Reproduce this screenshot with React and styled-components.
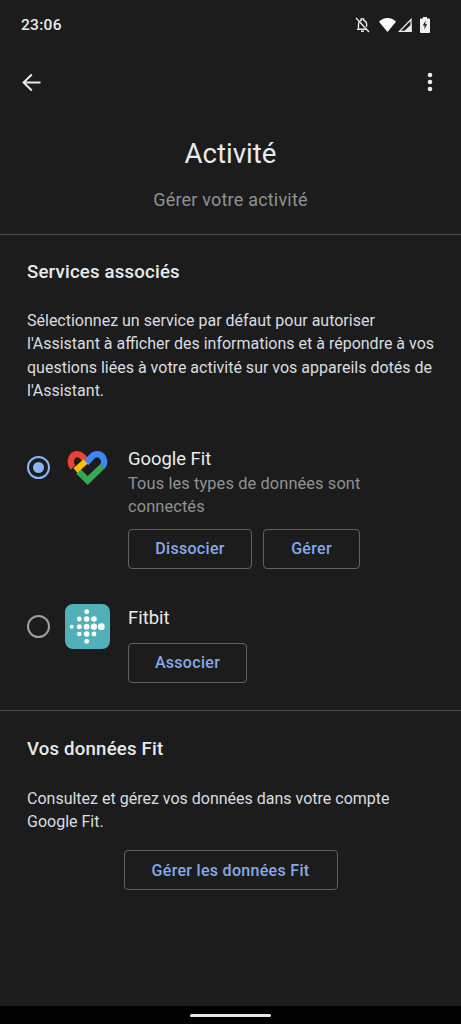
import React from 'react'
import styled, { createGlobalStyle } from 'styled-components'

const Global = createGlobalStyle`
html, body { margin: 0; padding: 0; background: #1c1c1c; }
* { box-sizing: border-box; }
`
const Screen = styled.div`
width: 461px;
height: 1024px;
background: #1c1c1c;
display: flex;
flex-direction: column;
font-family: Roboto, "Open Sans", sans-serif;
color: #e8eaed;
overflow: hidden;
`
const StatusBar = styled.div`
height: 50px;
flex: none;
padding: 0 31px 0 21px;
display: flex;
align-items: center;
justify-content: space-between;
font-size: 15.5px;
font-weight: 500;
letter-spacing: 0.3px;
`
const StatusIcons = styled.div`
display: flex;
align-items: center;
`
const StatusIcon = styled.span`
display: flex;
margin-left: ${({ $left }) => $left}px;
`
const Toolbar = styled.div`
height: 64px;
flex: none;
padding: 0 28px 0 22px;
display: flex;
align-items: center;
justify-content: space-between;
`
const Header = styled.div`
display: flex;
flex-direction: column;
align-items: center;
height: 121px;
flex: none;
padding-top: 24px;
border-bottom: 1px solid #4d4e50;
`
const Title = styled.div`
font-size: 27.6px;
line-height: 32px;
color: #e8eaed;
`
const Subtitle = styled.div`
font-size: 18px;
letter-spacing: 0.2px;
line-height: 24px;
margin-top: 18px;
color: #8e9297;
`
const Section = styled.div`
padding: ${({ $top }) => $top}px 27px 0;
`
const Heading = styled.div`
font-size: 18.6px;
font-weight: 500;
letter-spacing: 0.2px;
line-height: 24px;
color: #e8eaed;
`
const Para = styled.div`
font-size: 16px;
line-height: 23.3px;
white-space: nowrap;
margin-top: ${({ $top }) => $top}px;
color: #dadce0;
`
const ServiceRow = styled.div`
display: flex;
align-items: flex-start;
margin-top: ${({ $top }) => $top}px;
`
const Radio = styled.div`
width: 23px;
height: 23px;
flex: none;
border-radius: 50%;
border: 2px solid ${({ $on }) => ($on ? '#8ab4f8' : '#9aa0a6')};
display: flex;
align-items: center;
justify-content: center;
margin-top: ${({ $top }) => $top}px;
margin-right: 15px;
&::after {
  content: '';
  width: 11px;
  height: 11px;
  border-radius: 50%;
  background: ${({ $on }) => ($on ? '#8ab4f8' : 'transparent')};
}
`
const ServiceIcon = styled.div`
width: 45px;
flex: none;
margin-right: 18px;
padding-left: ${({ $left }) => $left || 0}px;
padding-top: ${({ $pad }) => $pad || 0}px;
line-height: 0;
`
const ServiceBody = styled.div`
flex: 1;
min-width: 0;
`
const ServiceName = styled.div`
font-size: 18.4px;
line-height: 25px;
padding-top: ${({ $top }) => $top || 0}px;
color: #e8eaed;
`
const ServiceDesc = styled.div`
font-size: 16.4px;
letter-spacing: 0.1px;
line-height: 23.3px;
margin-top: 1px;
color: #8e9297;
width: 270px;
`
const Buttons = styled.div`
display: flex;
gap: 11px;
margin-top: ${({ $top }) => $top}px;
`
const Button = styled.div`
height: 40px;
width: ${({ $w }) => $w}px;
border: 1px solid #5f6368;
border-radius: 4px;
display: flex;
align-items: center;
justify-content: center;
font-size: 16px;
font-weight: 500;
letter-spacing: 0.3px;
color: #84aaea;
`
const Divider = styled.div`
height: 1px;
background: #4d4e50;
margin-top: 27px;
`
const Centered = styled.div`
display: flex;
justify-content: center;
margin-top: 17px;
`
const Spacer = styled.div`
flex: 1;
`
const NavBar = styled.div`
height: 18px;
flex: none;
background: #000;
display: flex;
justify-content: center;
padding-top: 8px;
`
const Handle = styled.div`
width: 81px;
height: 3px;
border-radius: 2px;
background: #e8e8e8;
`

const BellOff = () => (
  <svg width="15" height="16" viewBox="0 0 15 16" fill="none" stroke="#e8eaed" strokeWidth="1.4">
    <path d="M3.500 11.500V7.200C3.500 5.500 4.300 4.200 5.600 3.600L6.100 3.300V2h2.600v1.300c1.800.5 2.900 2 2.900 3.900v2.600" />
    <path d="M2 12.200h9.500M6 14.300h2.800" />
    <path d="M1 1l13 14" />
  </svg>
)
const Wifi = () => (
  <svg width="17" height="14" viewBox="0 0 17 14"><path d="M0 3.800C2.200 1.400 5.200 0 8.500 0s6.300 1.400 8.500 3.800L8.500 14z" fill="#fff" /></svg>
)
const Signal = () => (
  <svg width="14" height="14" viewBox="0 0 14 14" fill="none" stroke="#e8eaed" strokeWidth="1.300"><path d="M13 1.500v11.800H1.500z" /><path d="M7 13.300L13 7.500v5.800z" fill="#e8eaed" /></svg>
)
const Battery = () => (
  <svg width="10" height="16" viewBox="0 0 10 16">
    <path d="M3 0h4v1.500h2.200c.4 0 .8.3.8.8v13c0 .4-.4.7-.8.7H.8c-.4 0-.8-.3-.8-.7v-13c0-.5.4-.8.8-.8H3z" fill="#f1f1f1" />
    <path d="M5.700 3.500L2.800 8.600h1.900l-.5 3.900 3-5.300H5.200z" fill="#1c1c1c" />
  </svg>
)
const BackArrow = () => (
  <svg width="19" height="19" viewBox="0 0 19 19" fill="none" stroke="#e8eaed" strokeWidth="2"><path d="M18.500 9.500H2M9.800 1.500L1.600 9.500l8.200 8" /></svg>
)
const MoreDots = () => (
  <svg width="6" height="20" viewBox="0 0 6 20" fill="#e8eaed"><circle cx="3" cy="3" r="2.300" /><circle cx="3" cy="10" r="2.300" /><circle cx="3" cy="17" r="2.300" /></svg>
)
const FitHeart = () => (
  <svg width="41" height="35" viewBox="0 0 41 35" fill="none" strokeWidth="6.300">
    <path d="M11.500 20.500L20.700 29.500L35.700 15" stroke="#34a853" />
    <path d="M6 16.500C1.700 12 4.200 3.200 10 3.200c2.200 0 3.800.8 5 2L20 10" stroke="#ea4335" />
    <path d="M19 12L25 5.500c1.300-1.400 3-2.300 5.500-2.300 6 0 8.500 8.500 5 12" stroke="#4285f4" />
    <path d="M8.500 19.500L18.500 10.500" stroke="#fbbc04" />
  </svg>
)
const dots = [
  [21.700, 7.700, 2.400], [21.700, 15, 2.800], [21.700, 22.700, 2.900], [21.700, 30, 2.800], [21.700, 37.300, 2.400],
  [14.300, 15, 2.400], [14.300, 22.700, 2.500], [14.300, 30, 2.300],
  [29, 15, 2.800], [29, 22.700, 3.100], [29, 30, 2.400],
  [6.700, 22.700, 2], [36.300, 22.700, 3.400],
]
const FitbitLogo = () => (
  <svg width="45" height="45" viewBox="0 0 45 45">
    <rect width="45" height="45" rx="8" fill="#52b0b9" />
    <g fill="#fff">
      {dots.map(([x, y, r]) => <circle key={x + '-' + y} cx={x} cy={y} r={r} />)}
    </g>
  </svg>
)

export default function App() {
  return (
    <Screen>
      <Global />
      <StatusBar>
        <span>23:06</span>
        <StatusIcons>
          <BellOff />
          <StatusIcon $left={9}><Wifi /></StatusIcon>
          <StatusIcon $left={2}><Signal /></StatusIcon>
          <StatusIcon $left={8}><Battery /></StatusIcon>
        </StatusIcons>
      </StatusBar>
      <Toolbar>
        <BackArrow />
        <MoreDots />
      </Toolbar>
      <Header>
        <Title>Activité</Title>
        <Subtitle>Gérer votre activité</Subtitle>
      </Header>
      <Section $top={25}>
        <Heading>Services associés</Heading>
        <Para $top={25}>
          Sélectionnez un service par défaut pour autoriser<br />
          l'Assistant à afficher des informations et à répondre à vos<br />
          questions liées à votre activité sur vos appareils dotés de<br />
          l'Assistant.
        </Para>
        <ServiceRow $top={44}>
          <Radio $on $top={10} />
          <ServiceIcon $left={2} $pad={5}><FitHeart /></ServiceIcon>
          <ServiceBody>
            <ServiceName>Google Fit</ServiceName>
            <ServiceDesc>Tous les types de données sont connectés</ServiceDesc>
            <Buttons $top={10}>
              <Button $w={124}>Dissocier</Button>
              <Button $w={97}>Gérer</Button>
            </Buttons>
          </ServiceBody>
        </ServiceRow>
        <ServiceRow $top={35}>
          <Radio $top={11} />
          <ServiceIcon><FitbitLogo /></ServiceIcon>
          <ServiceBody>
            <ServiceName $top={1}>Fitbit</ServiceName>
            <Buttons $top={13}>
              <Button $w={119}>Associer</Button>
            </Buttons>
          </ServiceBody>
        </ServiceRow>
      </Section>
      <Divider />
      <Section $top={26}>
        <Heading>Vos données Fit</Heading>
        <Para $top={26}>
          Consultez et gérez vos données dans votre compte<br />
          Google Fit.
        </Para>
        <Centered>
          <Button $w={214}>Gérer les données Fit</Button>
        </Centered>
      </Section>
      <Spacer />
      <NavBar><Handle /></NavBar>
    </Screen>
  )
}
